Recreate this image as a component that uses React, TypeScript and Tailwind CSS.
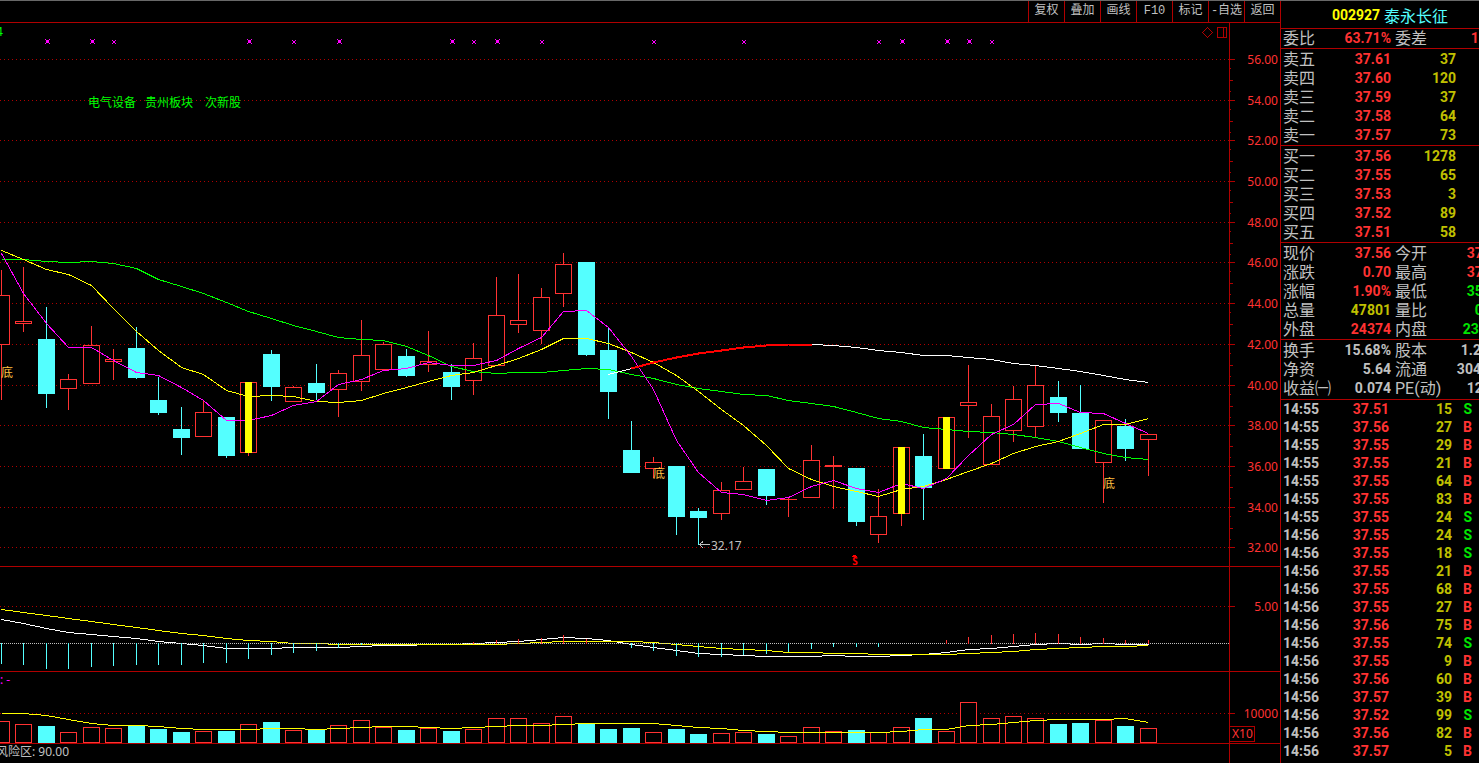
import type { ReactNode } from 'react';
import clsx from 'clsx';

type Candle = [high: number, top: number, bottom: number, low: number, kind: 'up' | 'down' | 'hot'];

// All y values share one vertical scale that runs through the three panes
const CANDLES: Candle[] = [
  [270, 295, 344, 399, 'up'],
  [267, 321, 323, 331, 'up'],
  [307, 339, 393, 407, 'down'],
  [374, 379, 388, 409, 'up'],
  [326, 345, 383, 383, 'up'],
  [349, 359, 361, 379, 'up'],
  [327, 348, 377, 378, 'down'],
  [377, 400, 412, 414, 'down'],
  [407, 429, 437, 454, 'down'],
  [401, 412, 436, 436, 'up'],
  [417, 417, 455, 457, 'down'],
  [382, 382, 452, 455, 'hot'],
  [350, 354, 386, 400, 'down'],
  [386, 387, 401, 401, 'up'],
  [364, 383, 392, 399, 'down'],
  [370, 373, 389, 416, 'up'],
  [320, 355, 381, 390, 'up'],
  [342, 344, 369, 369, 'up'],
  [349, 356, 375, 376, 'down'],
  [331, 361, 364, 371, 'up'],
  [364, 372, 386, 399, 'down'],
  [343, 358, 380, 394, 'up'],
  [277, 315, 365, 365, 'up'],
  [274, 320, 324, 332, 'up'],
  [288, 297, 330, 343, 'up'],
  [253, 264, 293, 306, 'up'],
  [262, 262, 354, 355, 'down'],
  [327, 350, 391, 418, 'down'],
  [421, 450, 472, 472, 'down'],
  [457, 462, 468, 477, 'up'],
  [466, 466, 516, 534, 'down'],
  [508, 511, 517, 544, 'down'],
  [482, 490, 513, 519, 'up'],
  [467, 481, 489, 489, 'up'],
  [469, 469, 495, 504, 'down'],
  [497, 499, 499, 516, 'up'],
  [445, 460, 497, 497, 'up'],
  [456, 465, 466, 508, 'up'],
  [468, 468, 521, 525, 'down'],
  [489, 516, 534, 542, 'up'],
  [447, 447, 513, 525, 'hot'],
  [434, 456, 487, 519, 'down'],
  [417, 417, 468, 468, 'hot'],
  [365, 402, 405, 437, 'up'],
  [404, 416, 464, 464, 'up'],
  [386, 399, 430, 441, 'up'],
  [366, 385, 426, 436, 'up'],
  [381, 397, 412, 421, 'down'],
  [385, 413, 448, 448, 'down'],
  [420, 420, 462, 502, 'up'],
  [419, 426, 448, 460, 'down'],
  [434, 434, 439, 475, 'up'],
];

const MA5 = [
  253, 293, 323, 347, 347, 360, 372, 375, 387, 400, 420, 420, 415, 405, 401, 384, 379, 370, 368, 362, 365, 365, 360,
  348, 337, 311, 310, 327, 356, 389, 440, 472, 492, 494, 500, 497, 486, 480, 488, 492, 483, 488, 478, 455, 434, 424,
  404, 403, 412, 413, 423, 433,
];
const MA10 = [
  250, 259, 269, 274, 285, 308, 331, 350, 367, 374, 390, 396, 395, 396, 401, 402, 400, 393, 387, 381, 375, 372, 365,
  358, 349, 338, 338, 343, 352, 362, 375, 391, 409, 425, 445, 468, 479, 486, 491, 496, 489, 486, 479, 471, 463, 453,
  446, 441, 433, 424, 424, 418,
];
const MA20 = [
  259, 259, 261, 262, 261, 263, 268, 279, 286, 293, 302, 311, 318, 325, 331, 337, 339, 340, 346, 355, 366, 371, 373,
  372, 372, 370, 368, 369, 374, 378, 384, 388, 391, 394, 395, 400, 403, 406, 412, 418, 421, 427, 429, 431, 432, 434,
  437, 441, 447, 453, 457, 459,
];
// Long average, starts at candle 27
const MA60_START = 27;
const MA60 = [
  374, 368, 362, 357, 353, 350, 347, 345, 344, 344, 345, 347, 350, 352, 355, 355, 357, 359, 363, 365, 368, 371, 375,
  379, 382,
];

const DIF = [
  619, 623, 628, 632, 634, 636, 638, 641, 643, 645, 648, 648, 648, 647, 647, 647, 646, 645, 645, 644, 644, 643, 642,
  641, 639, 637, 638, 640, 644, 647, 650, 653, 654, 655, 656, 656, 656, 655, 656, 656, 655, 654, 652, 649, 648, 646,
  644, 643, 644, 643, 644, 644,
];
const DEA = [
  609, 612, 615, 618, 621, 624, 627, 630, 633, 635, 638, 640, 641, 643, 643, 644, 644, 644, 644, 644, 644, 644, 644,
  643, 642, 641, 641, 641, 641, 642, 644, 646, 648, 649, 650, 652, 652, 653, 653, 654, 654, 654, 654, 653, 652, 651,
  649, 648, 647, 646, 646, 645,
];
const MACD = [
  -20, -21, -25, -25, -23, -22, -21, -21, -21, -19, -19, -15, -11, -9, -7, -4, -1, 0, 0, 0, 0, 1, 3, 4, 5, 8, 4, 0, -4,
  -7, -12, -13, -13, -11, -10, -8, -5, -3, -3, -3, 0, 0, 3, 6, 8, 9, 10, 9, 6, 5, 3, 3,
];

const VOLUME = [
  721, 724, 726, 732, 727, 728, 725, 729, 732, 731, 731, 724, 722, 730, 729, 725, 720, 727, 730, 728, 731, 729, 718,
  718, 723, 716, 723, 729, 728, 732, 729, 734, 733, 732, 734, 736, 727, 731, 730, 732, 727, 718, 731, 702, 718, 716,
  718, 724, 723, 720, 726, 728,
];
const VOLUME_MA = [
  713, 713, 715, 719, 723, 725, 725, 726, 728, 729, 729, 729, 728, 728, 729, 728, 727, 726, 726, 727, 728, 727, 726,
  725, 725, 724, 723, 723, 723, 723, 725, 727, 728, 730, 731, 732, 732, 732, 732, 732, 731, 729, 729, 725, 724, 722,
  720, 719, 719, 719, 718, 722,
];

const PRICE_GRID = [
  { y: 59, label: '56.00' },
  { y: 100, label: '54.00' },
  { y: 140, label: '52.00' },
  { y: 181, label: '50.00' },
  { y: 222, label: '48.00' },
  { y: 262, label: '46.00' },
  { y: 303, label: '44.00' },
  { y: 344, label: '42.00' },
  { y: 385, label: '40.00' },
  { y: 425, label: '38.00' },
  { y: 466, label: '36.00' },
  { y: 507, label: '34.00' },
  { y: 547, label: '32.00' },
];

const BIG_MARKS = [47, 92, 249, 339, 452, 497, 902, 947, 969];
const SMALL_MARKS = [113, 293, 473, 541, 653, 743, 878, 991];

const RED = '#ff3232';
const CYAN = '#54ffff';
const LINE = '#b00000';

const cx = (i: number) => Math.floor(1.45 + i * 22.49);

const points = (ys: number[], start = 0) => ys.map((y, i) => `${cx(i + start) + 0.5},${y + 0.5}`).join(' ');

function Curve({ ys, start = 0, color, width = 1 }: { ys: number[]; start?: number; color: string; width?: number }) {
  return <polyline points={points(ys, start)} fill="none" stroke={color} strokeWidth={width} />;
}

function Grid({ y, color = LINE, dash = '1 3' }: { y: number; color?: string; dash?: string }) {
  return <line x1={-2000} x2={1229} y1={y + 0.5} y2={y + 0.5} stroke={color} strokeDasharray={dash} />;
}

function Bar({ x, top, bottom, solid }: { x: number; top: number; bottom: number; solid: boolean }) {
  const height = bottom - top + 1;
  return (
    <>
      <rect x={x - 8} y={top} width={17} height={height} fill={solid ? CYAN : RED} />
      {!solid && height > 2 && <rect x={x - 7} y={top + 1} width={15} height={height - 2} fill="#000" />}
    </>
  );
}

function Mark({ x, big }: { x: number; big?: boolean }) {
  const s = big ? 5 : 4;
  const left = big ? x - 2 : x - 1;
  const top = big ? 39 : 40;
  return (
    <g fill="#ff00ff">
      <rect x={left + 1} y={top + 1} width={s - 2} height={s - 2} />
      <rect x={left} y={top} width={1} height={1} />
      <rect x={left + s - 1} y={top} width={1} height={1} />
      <rect x={left} y={top + s - 1} width={1} height={1} />
      <rect x={left + s - 1} y={top + s - 1} width={1} height={1} />
    </g>
  );
}

function AxisTick({ y, label }: { y: number; label: string }) {
  return (
    <>
      <rect x={0} y={y} width={5} height={1} fill={LINE} />
      <text x={48} y={y + 5} textAnchor="end" fill={RED}>
        {label}
      </text>
    </>
  );
}

function Axis({ viewBox, height, children }: { viewBox: string; height: string; children: ReactNode }) {
  return (
    <div className="shrink-0 border-l border-[#b00000]">
      <svg
        className={clsx("block w-[50px] font-['Noto_Sans',sans-serif] text-[12px]", height)}
        viewBox={viewBox}
        shapeRendering="crispEdges"
      >
        {children}
      </svg>
    </div>
  );
}

function PricePane() {
  return (
    <section className="flex border-b border-[#b00000]">
      <div className="flex min-w-0 flex-1 justify-end overflow-hidden">
        <svg
          className="h-[543px] w-[1229px] shrink-0 overflow-visible font-['Noto_Sans','Noto_Sans_CJK_SC',sans-serif] text-[12px]"
          viewBox="0 23 1229 543"
          shapeRendering="crispEdges"
        >
          {PRICE_GRID.map((g) => (
            <Grid key={g.y} y={g.y} />
          ))}
          {BIG_MARKS.map((x) => (
            <Mark key={x} x={x} big />
          ))}
          {SMALL_MARKS.map((x) => (
            <Mark key={x} x={x} />
          ))}

          {CANDLES.map(([high, top, bottom, low, kind], i) => (
            <g key={i}>
              <rect x={cx(i)} y={high} width={1} height={low - high + 1} fill={kind === 'down' ? CYAN : RED} />
              <Bar x={cx(i)} top={top} bottom={bottom} solid={kind === 'down'} />
            </g>
          ))}

          <Curve ys={MA20} color="#00ff00" />
          <Curve ys={MA10} color="#ffff00" />
          <Curve ys={MA5} color="#ff00ff" />
          <Curve ys={MA60} start={MA60_START} color="#ffffff" />
          <Curve ys={MA60.slice(1, 10)} start={MA60_START + 1} color="#ff0000" width={2} />

          {CANDLES.map(([, top, bottom, , kind], i) =>
            kind === 'hot' ? (
              <rect key={i} x={cx(i) - 3} y={top} width={7} height={bottom - top + 1} fill="#ffff00" />
            ) : null
          )}

          <g fill="#00ff00">
            <text x={-4} y={36}>4</text>
            <text x={88} y={107}>电气设备</text>
            <text x={145} y={107}>贵州板块</text>
            <text x={205} y={107}>次新股</text>
          </g>
          <g fill="#ffc040">
            <text x={1} y={377}>底</text>
            <text x={653} y={478}>底</text>
            <text x={1103} y={488}>底</text>
          </g>

          <path d="M710 544.5H699M703 541.5L699.5 544.5L703 548" fill="none" stroke="#c0c0c0" />
          <text x={711} y={550} fill="#c0c0c0">32.17</text>

          <path d="M852 557h5v-1h-1v-1h-3v1h-1z" fill="#ff0000" />
          <text x={855} y={565} textAnchor="middle" className="text-[10px] font-bold" fill="#ff0000">S</text>

          <g fill="none" stroke={LINE}>
            <path d="M1207.5 27.5l5 5l-5 5l-5 -5z" />
            <path d="M1217.5 27.5h9v10h-9zM1223.5 27.5v10" />
          </g>
        </svg>
      </div>
      <Axis viewBox="0 23 50 543" height="h-[543px]">
        {PRICE_GRID.map((g, i) => (
          <g key={g.y}>
            <AxisTick y={g.y} label={g.label} />
            {i < PRICE_GRID.length - 1 && (
              <g fill={LINE}>
                <rect x={0} y={g.y + 9} width={1} height={1} />
                <rect x={0} y={g.y + 21} width={3} height={1} />
                <rect x={0} y={g.y + 32} width={1} height={1} />
              </g>
            )}
          </g>
        ))}
      </Axis>
    </section>
  );
}

function MacdPane() {
  return (
    <section className="flex border-b border-[#b00000]">
      <div className="flex min-w-0 flex-1 justify-end overflow-hidden">
        <svg
          className="h-[104px] w-[1229px] shrink-0 overflow-visible"
          viewBox="0 567 1229 104"
          shapeRendering="crispEdges"
        >
          <Grid y={606} />
          <Curve ys={DIF} color="#ffffff" />
          <Curve ys={DEA} color="#ffff00" />
          <Grid y={643} color="#c0c0c0" dash="1 1" />
          {MACD.map((v, i) =>
            v === 0 ? null : (
              <rect
                key={i}
                x={cx(i)}
                y={v > 0 ? 643 - v : 643}
                width={1}
                height={Math.abs(v) + 1}
                fill={v > 0 ? RED : CYAN}
              />
            )
          )}
        </svg>
      </div>
      <Axis viewBox="0 567 50 104" height="h-[104px]">
        <AxisTick y={606} label="5.00" />
      </Axis>
    </section>
  );
}

function VolumePane() {
  return (
    <section className="flex border-b border-[#b00000]">
      <div className="flex min-w-0 flex-1 justify-end overflow-hidden">
        <svg
          className="h-[71px] w-[1229px] shrink-0 overflow-visible font-['Noto_Sans',sans-serif] text-[12px]"
          viewBox="0 672 1229 71"
          shapeRendering="crispEdges"
        >
          <Grid y={713} />
          {VOLUME.map((top, i) => (
            <Bar key={i} x={cx(i)} top={top} bottom={742} solid={CANDLES[i][4] === 'down'} />
          ))}
          <Curve ys={VOLUME_MA} color="#ffff00" />
          <text x={0} y={684} fill="#ff00ff">: -</text>
        </svg>
      </div>
      <Axis viewBox="0 672 50 71" height="h-[71px]">
        <AxisTick y={713} label="10000" />
        <path d="M0 726.5h24.5v15h-24.5" fill="none" stroke={LINE} />
        <text x={2} y={738} fill={RED}>X10</text>
      </Axis>
    </section>
  );
}

const TOOLS = ['复权', '叠加', '画线', 'F10', '标记', '-自选', '返回'];

function Toolbar() {
  return (
    <nav className="flex h-[22px] justify-end border-b border-[#b00000]">
      {TOOLS.map((tool) => (
        <button
          key={tool}
          type="button"
          className="w-9 cursor-pointer border-l border-[#b00000] text-center font-['Liberation_Mono','Noto_Sans_CJK_SC',monospace] text-[12px] leading-[21px] whitespace-nowrap text-[#c0c0c0]"
        >
          {tool}
        </button>
      ))}
    </nav>
  );
}

const SELLS = [
  ['卖五', '37.61', '37'],
  ['卖四', '37.60', '120'],
  ['卖三', '37.59', '37'],
  ['卖二', '37.58', '64'],
  ['卖一', '37.57', '73'],
];

const BUYS = [
  ['买一', '37.56', '1278'],
  ['买二', '37.55', '65'],
  ['买三', '37.53', '3'],
  ['买四', '37.52', '89'],
  ['买五', '37.51', '58'],
];

type Tone = 'red' | 'green' | 'yellow' | 'gray';
type Stat = [label: string, value: string, tone: Tone];

const TONES: Record<Tone, string> = {
  red: 'text-[#ff3232]',
  green: 'text-[#00e600]',
  yellow: 'text-[#c0c000]',
  gray: 'text-[#c0c0c0]',
};

const ORDER_RATIO: [Stat, Stat][] = [[['委比', '63.71%', 'red'], ['委差', '1162', 'red']]];

const QUOTE: [Stat, Stat][] = [
  [['现价', '37.56', 'red'], ['今开', '37.31', 'red']],
  [['涨跌', '0.70', 'red'], ['最高', '37.58', 'red']],
  [['涨幅', '1.90%', 'red'], ['最低', '35.50', 'green']],
  [['总量', '47801', 'yellow'], ['量比', '0.96', 'green']],
  [['外盘', '24374', 'red'], ['内盘', '23427', 'green']],
];

const FUNDAMENTALS: [Stat, Stat][] = [
  [['换手', '15.68%', 'gray'], ['股本', '1.22亿', 'gray']],
  [['净资', '5.64', 'gray'], ['流通', '3049万', 'gray']],
  [['收益㈠', '0.074', 'gray'], ['PE(动)', '126.9', 'gray']],
];

const TRADES = [
  ['14:55', '37.51', '15', 'S'],
  ['14:55', '37.56', '27', 'B'],
  ['14:55', '37.55', '29', 'B'],
  ['14:55', '37.55', '21', 'B'],
  ['14:55', '37.55', '64', 'B'],
  ['14:55', '37.55', '83', 'B'],
  ['14:55', '37.55', '24', 'S'],
  ['14:56', '37.55', '24', 'S'],
  ['14:56', '37.55', '18', 'S'],
  ['14:56', '37.55', '21', 'B'],
  ['14:56', '37.55', '68', 'B'],
  ['14:56', '37.55', '27', 'B'],
  ['14:56', '37.56', '75', 'B'],
  ['14:56', '37.55', '74', 'S'],
  ['14:56', '37.55', '9', 'B'],
  ['14:56', '37.56', '60', 'B'],
  ['14:56', '37.57', '39', 'B'],
  ['14:56', '37.52', '99', 'S'],
  ['14:56', '37.56', '82', 'B'],
  ['14:56', '37.57', '5', 'B'],
];

const LABEL = "font-['Roboto','Noto_Sans_CJK_SC',sans-serif] text-[16px] text-[#c0c0c0]";
const NUMBER = "font-['Roboto','Noto_Sans_CJK_SC',sans-serif] text-[14px] font-bold";

function Levels({ rows }: { rows: string[][] }) {
  return (
    <div className="h-[97px] border-b border-[#b00000] pt-px">
      <table className="w-[175px] table-fixed border-collapse">
        <tbody>
          {rows.map(([name, price, volume]) => (
            <tr key={name} className="h-[19px] leading-[19px]">
              <th scope="row" className={clsx(LABEL, 'w-[50px] p-0 pl-[2px] text-left font-normal')}>{name}</th>
              <td className={clsx(NUMBER, 'w-[60px] p-0 text-right text-[#ff3232]')}>{price}</td>
              <td className={clsx(NUMBER, 'p-0 text-right text-[#c0c000]')}>{volume}</td>
            </tr>
          ))}
        </tbody>
      </table>
    </div>
  );
}

function Stats({ rows, className }: { rows: [Stat, Stat][]; className?: string }) {
  return (
    <div className={clsx('border-b border-[#b00000]', className)}>
      {rows.map((pair) => (
        <dl key={pair[0][0]} className="flex h-[19px] w-[223px] gap-1 pl-[2px] leading-[19px]">
          {pair.map(([label, value, tone]) => (
            <div key={label} className="flex w-[108px] shrink-0 justify-between whitespace-nowrap">
              <dt className={LABEL}>{label}</dt>
              <dd className={clsx(NUMBER, TONES[tone])}>{value}</dd>
            </div>
          ))}
        </dl>
      ))}
    </div>
  );
}

function Trades() {
  return (
    <table className="w-[191px] table-fixed border-collapse">
      <tbody>
        {TRADES.map(([time, price, volume, side], i) => (
          <tr key={i} className={clsx(NUMBER, 'h-[18px] leading-[18px]')}>
            <td className="w-[50px] p-0 pl-[2px] text-[#c0c0c0]">{time}</td>
            <td className="w-[58px] p-0 text-right text-[#ff3232]">{price}</td>
            <td className="w-[63px] p-0 text-right text-[#c0c000]">{volume}</td>
            <td className={clsx('p-0 text-right', side === 'S' ? 'text-[#00e600]' : 'text-[#ff3232]')}>{side}</td>
          </tr>
        ))}
      </tbody>
    </table>
  );
}

export default function App() {
  return (
    <div className="flex min-h-screen flex-col overflow-hidden border-t border-[#686868] bg-black">
      <div className="flex flex-1">
        <main className="flex min-w-0 flex-1 flex-col">
          <Toolbar />
          <PricePane />
          <MacdPane />
          <VolumePane />
          <footer className="flex flex-1">
            <p className="-ml-1 flex-1 font-['Noto_Sans','Noto_Sans_CJK_SC',sans-serif] text-[12px] leading-4 whitespace-nowrap text-[#c0c0c0]">
              风险区: 90.00
            </p>
            <div className="w-[51px] border-l border-[#b00000]" />
          </footer>
        </main>

        <aside className="w-[199px] shrink-0 overflow-hidden border-l border-[#b00000]">
          <h1 className="flex h-7 items-center justify-center gap-1 border-b border-[#b00000] pl-5 leading-none">
            <span className={clsx(NUMBER, 'text-[#ffff00]')}>002927</span>
            <span className="font-['Noto_Sans_CJK_SC',sans-serif] text-[16px] text-[#54ffff]">泰永长征</span>
          </h1>
          <Stats rows={ORDER_RATIO} />
          <Levels rows={SELLS} />
          <Levels rows={BUYS} />
          <Stats rows={QUOTE} className="pt-px" />
          <Stats rows={FUNDAMENTALS} className="py-px" />
          <Trades />
        </aside>
      </div>
    </div>
  );
}
